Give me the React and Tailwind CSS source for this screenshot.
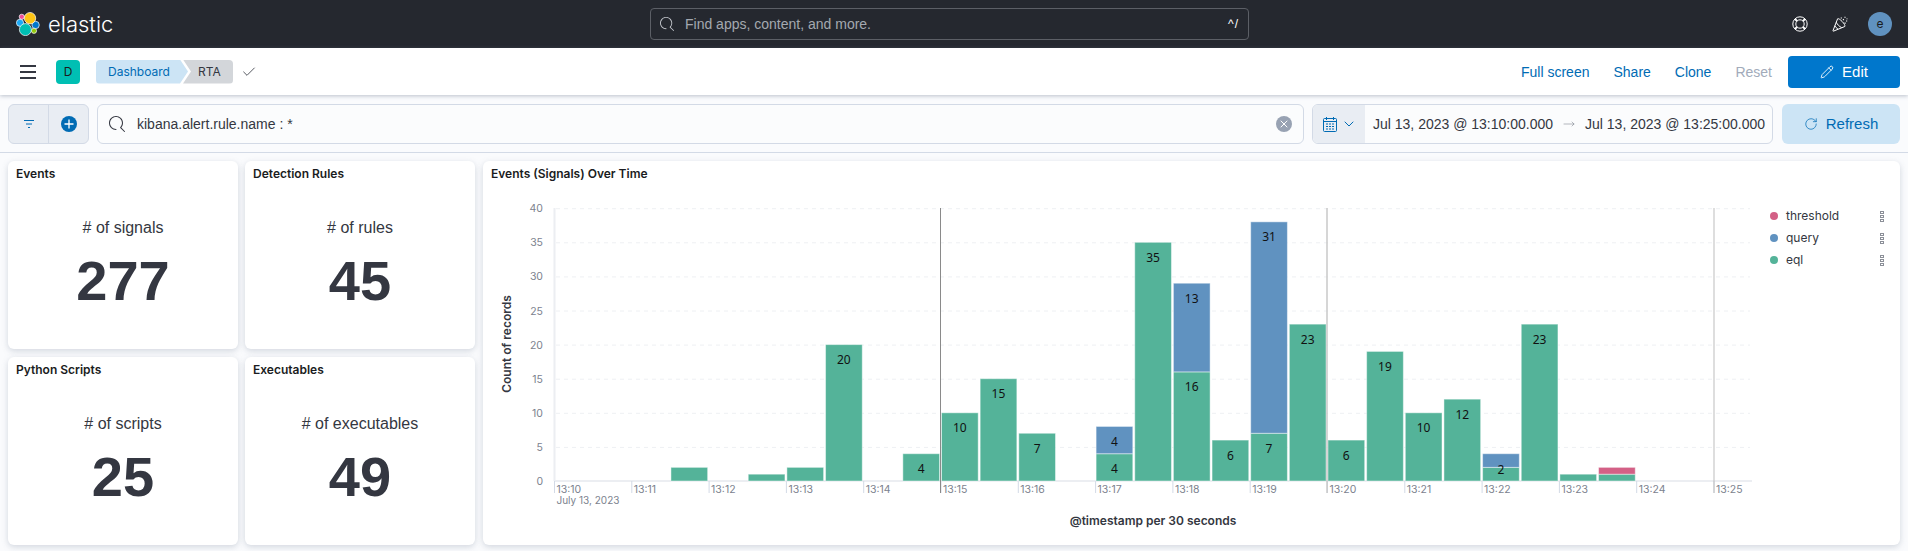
import React from "react";
import { Check, ChevronDown, MoveRight, Pencil, RotateCw, X } from "lucide-react";

const bars = [
  { i: 3, eql: 2 },
  { i: 5, eql: 1 },
  { i: 6, eql: 2 },
  { i: 7, eql: 20, show: true },
  { i: 9, eql: 4, show: true },
  { i: 10, eql: 10, show: true },
  { i: 11, eql: 15, show: true },
  { i: 12, eql: 7, show: true },
  { i: 14, eql: 4, query: 4, show: true },
  { i: 15, eql: 35, show: true },
  { i: 16, eql: 16, query: 13, show: true },
  { i: 17, eql: 6, show: true },
  { i: 18, eql: 7, query: 31, show: true },
  { i: 19, eql: 23, show: true },
  { i: 20, eql: 6, show: true },
  { i: 21, eql: 19, show: true },
  { i: 22, eql: 10, show: true },
  { i: 23, eql: 12, show: true },
  { i: 24, eql: 2, query: 2, tiny: true },
  { i: 25, eql: 23, show: true },
  { i: 26, eql: 1 },
  { i: 27, eql: 1, threshold: 1 },
];

const stats = [
  { title: "Events", label: "# of signals", value: "277" },
  { title: "Detection Rules", label: "# of rules", value: "45" },
  { title: "Python Scripts", label: "# of scripts", value: "25" },
  { title: "Executables", label: "# of executables", value: "49" },
];

const legend = [
  { name: "threshold", color: "bg-[#d36086]" },
  { name: "query", color: "bg-[#6092c0]" },
  { name: "eql", color: "bg-[#54b399]" },
];

const minutes = Array.from({ length: 16 }, (_, n) => n);

// svg space starts at page x=483, y=182
const X0 = 71;
const SLOT = 38.65;
const MINUTE = 77.3;
const BASE = 299;
const UNIT = 6.82;

const SearchIcon = ({ className }) => (
  <svg viewBox="0 0 16 16" className={className} fill="currentColor">
    <path d="m11.271 11.978 3.872 3.873a.502.502 0 0 0 .708 0 .502.502 0 0 0 0-.708l-3.565-3.564c2.38-2.747 2.267-6.923-.342-9.532-2.73-2.73-7.17-2.73-9.898 0-2.728 2.729-2.728 7.17 0 9.9a6.955 6.955 0 0 0 4.949 2.05.5.5 0 0 0 0-1 5.96 5.96 0 0 1-4.242-1.757 6.01 6.01 0 0 1 0-8.486c2.337-2.34 6.143-2.34 8.484 0a6.01 6.01 0 0 1 .034 8.458.5.5 0 0 0 0 .766Z" />
  </svg>
);

const ElasticLogo = () => (
  <svg viewBox="16 12 24 24" className="w-6 h-6" stroke="#fff" strokeWidth="0.7">
    <circle cx="21.8" cy="16.8" r="2.6" fill="#f04e98" />
    <circle cx="20" cy="22.8" r="3.6" fill="#1ba9f5" />
    <circle cx="35.6" cy="25" r="3.7" fill="#0077cc" />
    <circle cx="34" cy="30.8" r="2.6" fill="#93c90e" />
    <circle cx="30" cy="18.2" r="5.7" fill="#fec514" />
    <circle cx="25.4" cy="29.6" r="6" fill="#00bfb3" />
  </svg>
);

const HelpRing = () => (
  <svg viewBox="0 0 16 16" className="w-4 h-4 text-white" fill="none" stroke="currentColor">
    <circle cx="8" cy="8" r="7.2" />
    <circle cx="8" cy="8" r="4.2" />
    <path d="M2.9 2.9l2.1 2.1M13.1 2.9L11 5M2.9 13.1L5 11M13.1 13.1L11 11" strokeWidth="2" />
  </svg>
);

const Cheer = () => (
  <svg viewBox="0 0 16 16" className="w-4 h-4 text-white" fill="none" stroke="currentColor" strokeLinejoin="round">
    <path d="M5.6 2.8L1 14.6c-.2.5.1.7.6.5l11.2-4.6c.5-.8-.6-3-2.6-5S6.3 2.2 5.6 2.8z" />
    <path d="M4.2 6.2c1.2 2.4 3 4.2 5.4 5.4M2.8 9.8c.8 1.4 1.7 2.3 3 3" />
    <path d="M9.3 1.5v1M13 .8v1M11 4l.8-.8M14 5h1.2M12.5 7.2h1.2M15 2.4v.8" strokeWidth="1.2" />
  </svg>
);

const CalendarIcon = () => (
  <svg viewBox="0 0 16 16" className="w-4 h-4 text-[#006bb4]" fill="none" stroke="currentColor">
    <rect x="1.5" y="2.5" width="13" height="13" rx="1" />
    <path d="M1.5 5.5h13M4.5 1v3M11.5 1v3" />
    <path d="M4 8h2M7 8h2M10 8h2M4 10.5h2M7 10.5h2M10 10.5h2M4 13h2M7 13h2M10 13h2" strokeWidth="1.2" />
  </svg>
);

const BarLabel = ({ x, top, value }) => (
  <text x={x} y={top + 19.5} textAnchor="middle" fontSize="12" fill="#111" className="font-['Noto_Sans',sans-serif]">
    {value}
  </text>
);

const EventsChart = () => (
  <svg width="1270" height="363" className="shrink-0">
    {[5, 10, 15, 20, 25, 30, 35, 40].map((v) => (
      <line key={v} x1={X0 + 2} x2="1267" y1={BASE - v * UNIT + 0.5} y2={BASE - v * UNIT + 0.5} stroke="#eef0f3" strokeDasharray="4 4" />
    ))}
    <line x1={X0 + 0.5} x2={X0 + 0.5} y1="26" y2={BASE} stroke="#eceef2" strokeWidth="2" />
    <line x1={X0} x2="1269" y1={BASE} y2={BASE} stroke="#eceef2" strokeWidth="2" />
    {[0, 5, 10, 15, 20, 25, 30, 35, 40].map((v) => (
      <text key={v} x="60" y={BASE - v * UNIT + 4} textAnchor="end" fontSize="10.5" fill="#7c828e">
        {v}
      </text>
    ))}
    {minutes.map((n) => (
      <g key={n}>
        <line x1={X0 + n * MINUTE + 0.5} x2={X0 + n * MINUTE + 0.5} y1={BASE} y2={BASE + 12} stroke="#d3dae6" />
        <text x={X0 + n * MINUTE + 2.5} y={BASE + 12} fontSize="10.5" fill="#7c828e">
          13:{10 + n}
        </text>
      </g>
    ))}
    <text x={X0 + 2.5} y={BASE + 23} fontSize="10" fill="#7c828e">
      July 13, 2023
    </text>
    {bars.map((b) => {
      const x = X0 + b.i * SLOT + 1;
      const w = 36.7;
      const eqlTop = BASE - b.eql * UNIT;
      const queryTop = eqlTop - (b.query || 0) * UNIT;
      const thresholdTop = queryTop - (b.threshold || 0) * UNIT;
      return (
        <g key={b.i} stroke="#fff" strokeOpacity="0.45">
          <rect x={x} y={eqlTop} width={w} height={b.eql * UNIT} fill="#54b399" />
          {b.query && <rect x={x} y={queryTop} width={w} height={b.query * UNIT} fill="#6092c0" />}
          {b.threshold && <rect x={x} y={thresholdTop} width={w} height={b.threshold * UNIT} fill="#d36086" />}
        </g>
      );
    })}
    {bars.map((b) => {
      const cx = X0 + b.i * SLOT + 19.3;
      const eqlTop = BASE - b.eql * UNIT;
      return (
        <g key={b.i} stroke="none">
          {b.show && <BarLabel x={cx} top={eqlTop} value={b.eql} />}
          {b.show && b.query && <BarLabel x={cx} top={eqlTop - b.query * UNIT} value={b.query} />}
          {b.tiny && <BarLabel x={cx} top={272} value={b.eql} />}
        </g>
      );
    })}
    <line x1="457.5" x2="457.5" y1="26" y2={BASE + 12} stroke="#8a8a8a" />
    <line x1="844" x2="844" y1="26" y2={BASE + 12} stroke="#c9c9c9" strokeWidth="1.5" />
    <line x1="1231" x2="1231" y1="26" y2={BASE + 12} stroke="#bdbdbd" />
    <text transform="translate(28 162) rotate(-90)" textAnchor="middle" fontSize="12" fontWeight="600" fill="#343741">
      Count of records
    </text>
    <text x="670" y="343" textAnchor="middle" fontSize="12" fontWeight="600" fill="#343741">
      @timestamp per 30 seconds
    </text>
  </svg>
);

const StatCard = ({ title, label, value }) => (
  <div className="bg-white rounded-md shadow-[0_2px_6px_rgba(109,121,145,0.28)] px-2 pt-[5px]">
    <h2 className="text-xs leading-4 font-semibold text-[#1a1c21]">{title}</h2>
    <div className="flex flex-col items-center mt-[34px] font-['Liberation_Sans',sans-serif]">
      <div className="text-base leading-6 text-[#343741]">{label}</div>
      <div className="mt-[11px] text-[56px] leading-[60px] font-bold text-[#343741]">{value}</div>
    </div>
  </div>
);

const UI_FONT = "font-['Liberation_Sans',sans-serif]";

export default function App() {
  return (
    <div className="font-['Inter',sans-serif] bg-[#fafbfd] min-h-[551px] overflow-hidden">
      <header className="h-12 bg-[#25282f] flex items-center pl-4 pr-4 relative">
        <div className="flex items-center gap-2 w-[634px]">
          <ElasticLogo />
          <span className="text-[22px] font-light text-white">elastic</span>
        </div>
        <div className={`w-[599px] h-8 border border-[#5c5f66] rounded flex items-center px-[9px] text-sm ${UI_FONT}`}>
          <SearchIcon className="w-[14px] h-[14px] text-[#c5c8ce]" />
          <span className="ml-[11px] text-[#a4a8b0]">Find apps, content, and more.</span>
          <span className="ml-auto text-xs text-white tracking-[1px]">^/</span>
        </div>
        <div className="ml-auto flex items-center">
          <HelpRing />
          <div className="ml-6">
            <Cheer />
          </div>
          <div className="w-6 h-6 rounded-full bg-[#6092c0] ml-5 flex items-center justify-center text-xs text-[#1a1c21]">e</div>
        </div>
      </header>

      <nav className="h-[47px] bg-white shadow-[0_1px_4px_rgba(109,121,145,0.45)] flex items-center pl-5 pr-2 relative">
        <svg viewBox="0 0 16 14" className="w-4 h-[14px] text-[#343741]" stroke="currentColor" strokeWidth="2">
          <path d="M0 1h16M0 7h16M0 13h16" />
        </svg>
        <div className="w-6 h-6 ml-5 rounded bg-[#00bfb3] flex items-center justify-center text-xs text-[#1a1c21]">D</div>
        <div className="flex items-center ml-4 text-xs h-6">
          <div className="h-6 w-[92px] pl-3 bg-[#cce4f5] text-[#006bb4] rounded-l flex items-center [clip-path:polygon(0_0,calc(100%-8px)_0,100%_50%,calc(100%-8px)_100%,0_100%)]">
            Dashboard
          </div>
          <div className="h-6 w-[50px] -ml-[5px] pl-[15px] bg-[#d3d6da] text-[#343741] rounded-r flex items-center [clip-path:polygon(0_0,100%_0,100%_100%,0_100%,8px_50%)]">
            RTA
          </div>
          <Check className="w-4 h-4 ml-2 text-[#343741]" strokeWidth={1.25} />
        </div>
        <div className={`ml-auto flex items-center text-sm text-[#006bb4] ${UI_FONT}`}>
          <span>Full screen</span>
          <span className="ml-6">Share</span>
          <span className="ml-6">Clone</span>
          <span className="ml-6 text-[#a2abba]">Reset</span>
          <button className="ml-4 w-28 h-8 rounded bg-[#0077cc] text-white text-[15px] font-medium flex items-center justify-center gap-2">
            <Pencil className="w-[14px] h-[14px]" strokeWidth={1.5} />
            Edit
          </button>
        </div>
      </nav>

      <div className={`flex gap-2 px-2 pt-[9px] pb-2 border-b border-[#d3dae6] text-sm ${UI_FONT}`}>
        <div className="w-[81px] h-10 shrink-0 flex rounded-md border border-[#d3dae6] bg-[#e9edf3]">
          <div className="flex-1 flex items-center justify-center border-r border-[#d3dae6]">
            <svg viewBox="0 0 12 10" className="w-3 h-[10px] text-[#006bb4]" stroke="currentColor">
              <path d="M1 1.5h10M3 5h6M5 8.5h2" />
            </svg>
          </div>
          <div className="flex-1 flex items-center justify-center">
            <svg viewBox="0 0 16 16" className="w-4 h-4">
              <circle cx="8" cy="8" r="8" fill="#006bb4" />
              <path d="M8 3.5v9M3.5 8h9" stroke="#fff" strokeWidth="1.3" />
            </svg>
          </div>
        </div>
        <div className="flex-1 h-10 flex items-center rounded-md border border-[#d3dae6] bg-[#fbfcfd] px-[11px] text-[#343741]">
          <SearchIcon className="w-4 h-4" />
          <span className="ml-3">kibana.alert.rule.name : *</span>
          <div className="ml-auto w-4 h-4 rounded-full bg-[#98a2b3] flex items-center justify-center">
            <X className="w-3 h-3 text-white" strokeWidth={2} />
          </div>
        </div>
        <div className="w-[461px] h-10 shrink-0 flex rounded-md border border-[#d3dae6] bg-[#fbfcfd] text-[#343741] overflow-hidden">
          <div className="w-[52px] bg-[#e9edf3] flex items-center pl-[9px] gap-[3px] text-[#006bb4]">
            <CalendarIcon />
            <ChevronDown className="w-4 h-4" strokeWidth={1.5} />
          </div>
          <div className="flex-1 flex items-center pl-2 whitespace-nowrap">
            <span>Jul 13, 2023 @ 13:10:00.000</span>
            <MoveRight className="w-3 h-3 mx-[10px] text-[#69707d]" strokeWidth={1} />
            <span>Jul 13, 2023 @ 13:25:00.000</span>
          </div>
        </div>
        <button className="ml-px w-[118px] h-10 shrink-0 rounded-md bg-[#cce4f5] text-[#006bb4] text-[15px] font-medium flex items-center justify-center gap-2">
          <RotateCw className="w-[14px] h-[14px]" strokeWidth={1.25} />
          Refresh
        </button>
      </div>

      <main className="pt-2 px-2 grid grid-cols-[230px_230px_1fr] grid-rows-[188px_188px] gap-x-[7px] gap-y-2">
        <StatCard {...stats[0]} />
        <StatCard {...stats[1]} />
        <section className="row-span-2 ml-px bg-white rounded-md shadow-[0_2px_6px_rgba(109,121,145,0.28)] pt-[5px]">
          <h2 className="text-xs leading-4 font-semibold text-[#1a1c21] px-2">Events (Signals) Over Time</h2>
          <div className="flex">
            <EventsChart />
            <ul className="flex-1 pt-[23px] pl-[17px] pr-[16px] text-xs text-[#343741]">
              {legend.map((l) => (
                <li key={l.name} className="h-[22px] flex items-center">
                  <span className={`w-2 h-2 rounded-full ${l.color}`} />
                  <span className="ml-2">{l.name}</span>
                  <span className="ml-auto flex flex-col gap-px">
                    <span className="w-[4px] h-[3px] border border-[#8b8f98]" />
                    <span className="w-[4px] h-[3px] border border-[#8b8f98]" />
                    <span className="w-[4px] h-[3px] border border-[#8b8f98]" />
                  </span>
                </li>
              ))}
            </ul>
          </div>
        </section>
        <StatCard {...stats[2]} />
        <StatCard {...stats[3]} />
      </main>
    </div>
  );
}
